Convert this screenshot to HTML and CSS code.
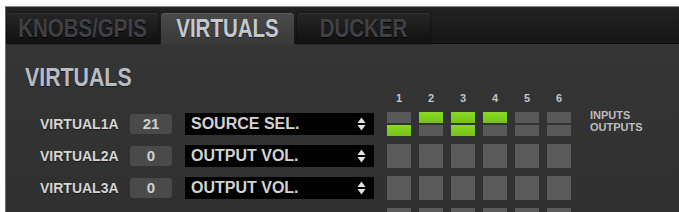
FILE: index.html
```html
<!DOCTYPE html>
<html lang="en">
  <head>
    <meta charset="UTF-8" />
    <title>Virtuals</title>
    <link rel="stylesheet" href="styles.css">
  </head>
  <body>
    <div class="window">
      <div class="tabbar">
        <div class="tab tab-knobs"><span>KNOBS/GPIS</span></div>
        <div class="tab tab-virtuals active"><span>VIRTUALS</span></div>
        <div class="tab tab-ducker"><span>DUCKER</span></div>
      </div>
      <div class="panel">
        <h1><span>VIRTUALS</span></h1>
        <div class="matrix">
          <div class="head-row">
            <span class="num">1</span>
            <span class="num">2</span>
            <span class="num">3</span>
            <span class="num">4</span>
            <span class="num">5</span>
            <span class="num">6</span>
          </div>

          <div class="row">
            <span class="label">VIRTUAL1A</span>
            <span class="value">21</span>
            <div class="select">
              <span>SOURCE SEL.</span>
              <svg width="9" height="14" viewBox="0 0 9 14"><path d="M0.5 6L4.5 0.5L8.5 6Z M0.5 8L4.5 13.5L8.5 8Z" fill="#e2e2e2"/></svg>
            </div>
            <div class="cells">
              <div class="io"><i></i><i class="on"></i></div>
              <div class="io"><i class="on"></i><i></i></div>
              <div class="io"><i class="on"></i><i class="on"></i></div>
              <div class="io"><i class="on"></i><i></i></div>
              <div class="io"><i></i><i></i></div>
              <div class="io"><i></i><i></i></div>
            </div>
            <div class="legend">
              <span>INPUTS</span>
              <span>OUTPUTS</span>
            </div>
          </div>

          <div class="row">
            <span class="label">VIRTUAL2A</span>
            <span class="value">0</span>
            <div class="select">
              <span>OUTPUT VOL.</span>
              <svg width="9" height="14" viewBox="0 0 9 14"><path d="M0.5 6L4.5 0.5L8.5 6Z M0.5 8L4.5 13.5L8.5 8Z" fill="#e2e2e2"/></svg>
            </div>
            <div class="cells">
              <div class="cell"></div>
              <div class="cell"></div>
              <div class="cell"></div>
              <div class="cell"></div>
              <div class="cell"></div>
              <div class="cell"></div>
            </div>
          </div>

          <div class="row">
            <span class="label">VIRTUAL3A</span>
            <span class="value">0</span>
            <div class="select">
              <span>OUTPUT VOL.</span>
              <svg width="9" height="14" viewBox="0 0 9 14"><path d="M0.5 6L4.5 0.5L8.5 6Z M0.5 8L4.5 13.5L8.5 8Z" fill="#e2e2e2"/></svg>
            </div>
            <div class="cells">
              <div class="cell"></div>
              <div class="cell"></div>
              <div class="cell"></div>
              <div class="cell"></div>
              <div class="cell"></div>
              <div class="cell"></div>
            </div>
          </div>

          <div class="row row-cut">
            <span class="label"></span>
            <span class="blank"></span>
            <div class="blank-select"></div>
            <div class="cells">
              <div class="cell"></div>
              <div class="cell"></div>
              <div class="cell"></div>
              <div class="cell"></div>
              <div class="cell"></div>
              <div class="cell"></div>
            </div>
          </div>
        </div>
      </div>
    </div>
  </body>
</html>
```

FILE: styles.css
```css
html,
body {
  height: 100%;
}
body {
  margin: 0;
  background: #fff;
  font-family: "Liberation Sans", Arial, sans-serif;
  overflow: hidden;
}

.window {
  margin: 6px 0 0 5px;
  height: 206px;
  overflow: hidden;
  background: linear-gradient(#363636, #303030);
  border-top: 1px solid #8a8a8a;
  border-left: 1px solid #6a6a6a;
}

/* tabs */
.tabbar {
  height: 37px;
  display: flex;
  align-items: flex-end;
  gap: 3px;
  padding-left: 1px;
  background: linear-gradient(#232323, #1a1a1a 60%, #161616);
  box-shadow: inset 0 -1px 0 #0e0e0e;
}
.tab {
  height: 31px;
  display: flex;
  align-items: center;
  justify-content: center;
  border-radius: 4px 4px 0 0;
  font-weight: bold;
  font-size: 25px;
  color: #404146;
  background: linear-gradient(#262626, #101010);
  box-shadow: inset 0 1px 0 #333, 0 0 2px #000;
  text-shadow: 0 1px 0 #000;
}
.tab span,
h1 span {
  display: inline-block;
  transform: scaleX(0.82);
  white-space: nowrap;
}
.tab-knobs {
  width: 151px;
}
.tab-virtuals,
.tab-ducker {
  width: 133px;
}
.tab.active {
  color: #c3c8d0;
  background: linear-gradient(#4a4a4a, #3a3a3a);
  box-shadow: inset 0 1px 0 #5a5a5a;
  text-shadow: 0 1px 1px #222;
}

/* panel */
.panel {
  padding-left: 19px;
}
h1 {
  margin: 20px 0 0 0;
  font-weight: bold;
  font-size: 26px;
  line-height: 26px;
  color: #b8bcc5;
  text-shadow: 0 1px 1px #1e1e1e;
}
h1 span {
  transform-origin: left center;
}

.matrix {
  margin-left: 15px;
  display: flex;
  flex-direction: column;
  gap: 8px;
}
.head-row {
  display: flex;
  gap: 8px;
  padding-left: 347px;
  margin-top: 1px;
  margin-bottom: -1px;
}
.num {
  width: 24px;
  text-align: center;
  font-size: 11px;
  line-height: 14px;
  font-weight: bold;
  color: #c4c4c4;
}

.row {
  height: 24px;
  display: flex;
  align-items: center;
}
.label {
  width: 90px;
  font-size: 14px;
  font-weight: bold;
  color: #d4d4d4;
  text-shadow: 0 1px 1px #1a1a1a;
}
.value,
.blank {
  width: 42px;
  height: 20px;
  line-height: 20px;
  text-align: center;
  border-radius: 3px;
  background: #4a4a4a;
  color: #cfcfcf;
  font-size: 15px;
  font-weight: bold;
}
.blank {
  background: none;
}
.select,
.blank-select {
  width: 189px;
  height: 22px;
  margin-left: 13px;
  box-sizing: border-box;
  padding: 0 8px 0 6px;
  display: flex;
  align-items: center;
  justify-content: space-between;
  background: #020202;
  color: #d2d2d2;
  font-size: 16px;
  font-weight: bold;
}
.blank-select {
  background: none;
}

.cells {
  display: flex;
  gap: 8px;
  margin-left: 13px;
}
.cell {
  width: 24px;
  height: 24px;
  background: #5a5a5a;
}
.io {
  width: 24px;
  height: 24px;
  display: flex;
  flex-direction: column;
  justify-content: space-between;
}
.io i {
  display: block;
  height: 11px;
  background: #595959;
}
.io i.on {
  background: linear-gradient(#8ad828, #74c414);
}

.legend {
  align-self: flex-start;
  margin: -3px 0 0 19px;
  display: flex;
  flex-direction: column;
  font-size: 11px;
  line-height: 12px;
  font-weight: bold;
  color: #bdbdbd;
}
```
